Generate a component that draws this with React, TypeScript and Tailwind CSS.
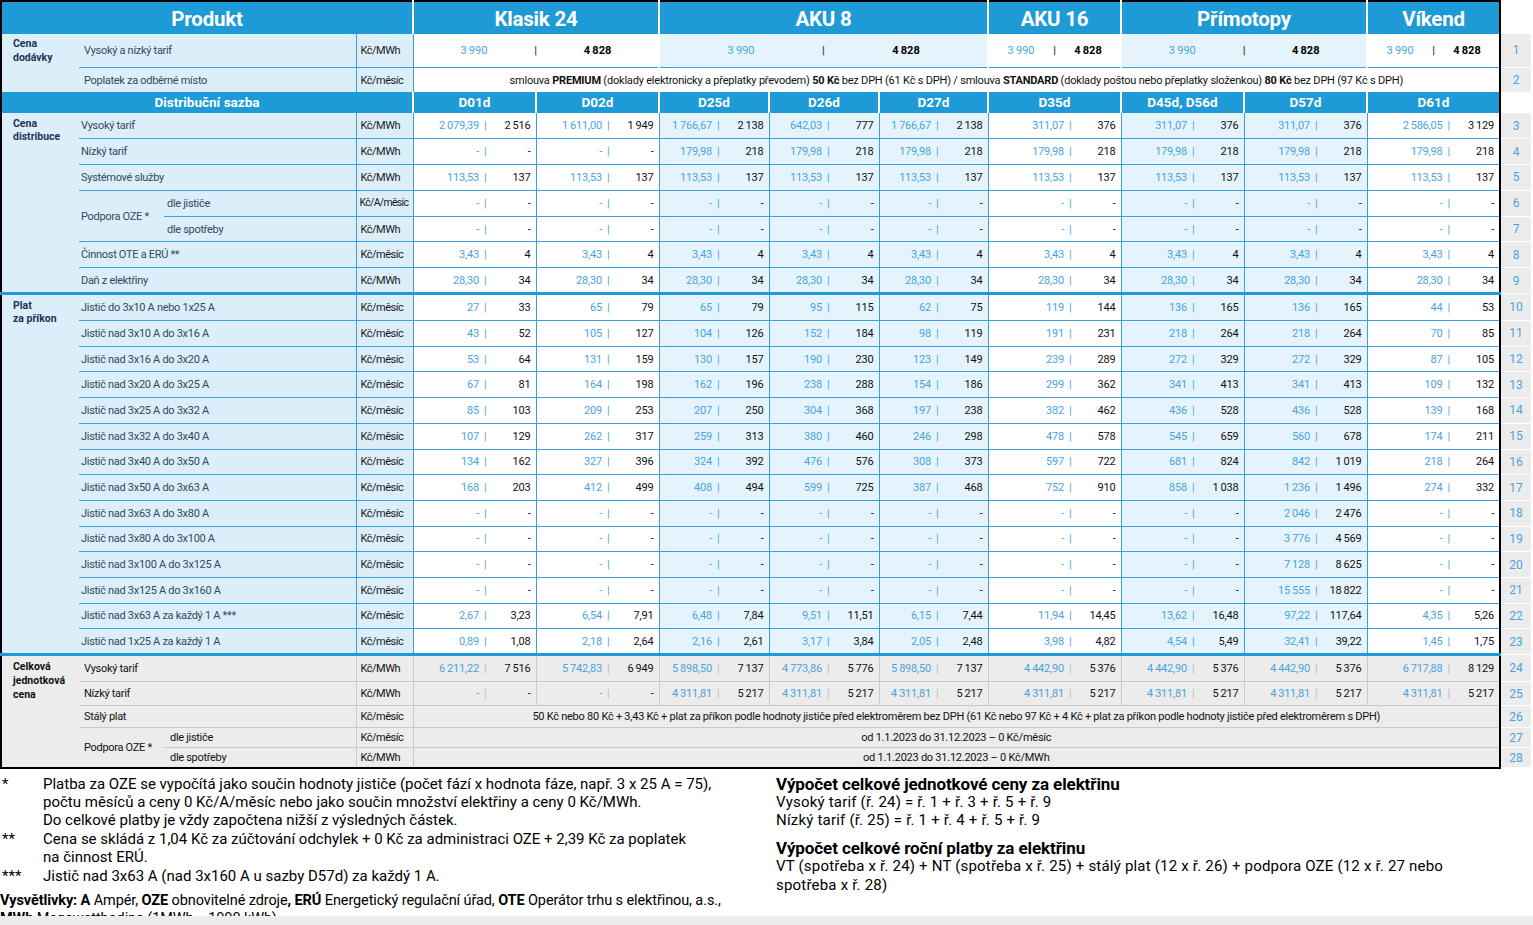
import React from 'react';

type V = [string, string] | null;

const sp = (s: string) => s.replace(/ /g, '\u2009');

const SHADED = [false, false, true, true, true, false, true, true, false];
const CODES = ['D01d', 'D02d', 'D25d', 'D26d', 'D27d', 'D35d', 'D45d, D56d', 'D57d', 'D61d'];

const fill = (v: V): V[] => Array.from({ length: 9 }, () => v);

const r3: V[] = [
  ['2 079,39', '2 516'], ['1 611,00', '1 949'], ['1 766,67', '2 138'], ['642,03', '777'], ['1 766,67', '2 138'],
  ['311,07', '376'], ['311,07', '376'], ['311,07', '376'], ['2 586,05', '3 129'],
];
const nt: V = ['179,98', '218'];
const r4: V[] = [null, null, nt, nt, nt, nt, nt, nt, nt];

const pr = (s: string): V[] =>
  s.split(',').map((p) => {
    const t = p.trim();
    if (t === '-') return null;
    const [a, b] = t.split('|');
    return [a.trim().replace(/_/g, ' ').replace(/;/g, ','), b.trim().replace(/_/g, ' ').replace(/;/g, ',')] as V;
  });

const prikon: { label: string; vals: V[] }[] = [
  { label: 'Jistič do 3x10 A nebo 1x25 A', vals: pr('27|33, 65|79, 65|79, 95|115, 62|75, 119|144, 136|165, 136|165, 44|53') },
  { label: 'Jistič nad 3x10 A do 3x16 A', vals: pr('43|52, 105|127, 104|126, 152|184, 98|119, 191|231, 218|264, 218|264, 70|85') },
  { label: 'Jistič nad 3x16 A do 3x20 A', vals: pr('53|64, 131|159, 130|157, 190|230, 123|149, 239|289, 272|329, 272|329, 87|105') },
  { label: 'Jistič nad 3x20 A do 3x25 A', vals: pr('67|81, 164|198, 162|196, 238|288, 154|186, 299|362, 341|413, 341|413, 109|132') },
  { label: 'Jistič nad 3x25 A do 3x32 A', vals: pr('85|103, 209|253, 207|250, 304|368, 197|238, 382|462, 436|528, 436|528, 139|168') },
  { label: 'Jistič nad 3x32 A do 3x40 A', vals: pr('107|129, 262|317, 259|313, 380|460, 246|298, 478|578, 545|659, 560|678, 174|211') },
  { label: 'Jistič nad 3x40 A do 3x50 A', vals: pr('134|162, 327|396, 324|392, 476|576, 308|373, 597|722, 681|824, 842|1_019, 218|264') },
  { label: 'Jistič nad 3x50 A do 3x63 A', vals: pr('168|203, 412|499, 408|494, 599|725, 387|468, 752|910, 858|1_038, 1_236|1_496, 274|332') },
  { label: 'Jistič nad 3x63 A do 3x80 A', vals: pr('-, -, -, -, -, -, -, 2_046|2_476, -') },
  { label: 'Jistič nad 3x80 A do 3x100 A', vals: pr('-, -, -, -, -, -, -, 3_776|4_569, -') },
  { label: 'Jistič nad 3x100 A do 3x125 A', vals: pr('-, -, -, -, -, -, -, 7_128|8_625, -') },
  { label: 'Jistič nad 3x125 A do 3x160 A', vals: pr('-, -, -, -, -, -, -, 15_555|18_822, -') },
  { label: 'Jistič nad 3x63 A za každý 1 A ***', vals: pr('2;67|3;23, 6;54|7;91, 6;48|7;84, 9;51|11;51, 6;15|7;44, 11;94|14;45, 13;62|16;48, 97;22|117;64, 4;35|5;26') },
  { label: 'Jistič nad 1x25 A za každý 1 A', vals: pr('0;89|1;08, 2;18|2;64, 2;16|2;61, 3;17|3;84, 2;05|2;48, 3;98|4;82, 4;54|5;49, 32;41|39;22, 1;45|1;75') },
];

const r24: V[] = pr('6_211;22|7_516, 5_742;83|6_949, 5_898;50|7_137, 4_773;86|5_776, 5_898;50|7_137, 4_442;90|5_376, 4_442;90|5_376, 4_442;90|5_376, 6_717;88|8_129');
const nt25: V = ['4 311,81', '5 217'];
const r25: V[] = [null, null, nt25, nt25, nt25, nt25, nt25, nt25, nt25];

function NumCell({ v, shaded, last, gray, thick }: { v: V; shaded: boolean; last: boolean; gray?: boolean; thick?: boolean }) {
  const [a, b] = v ?? ['-', '-'];
  const bg = gray ? 'bg-[#ececec]' : shaded ? 'bg-[#e5f4fc]' : 'bg-white';
  const bb = gray ? 'border-b border-b-[#c9c9c9]' : 'border-b border-b-[#3a9fdb]';
  const br = last ? 'border-r-2 border-r-black' : gray ? 'border-r border-r-[#c9c9c9]' : 'border-r border-r-[#3a9fdb]';
  const bt = thick ? 'border-t-[3px] border-t-[#1e9ad6]' : '';
  return (
    <td className={`${bg} ${bb} ${br} ${bt} p-0`}>
      <div className="flex items-center justify-end pr-[5px] whitespace-nowrap tracking-[-0.2px]">
        <span className="text-[#4aa3df]">{sp(a)}</span>
        <span className={gray ? 'ml-[5px] text-[#b8b8b8]' : 'ml-[5px] text-[#4aa3df]'}>|</span>
        <span className="w-[44px] text-right text-[#111]">{sp(b)}</span>
      </div>
    </td>
  );
}

function Nums({ vals, gray, thick }: { vals: V[]; gray?: boolean; thick?: boolean }) {
  return (
    <>
      {vals.map((v, i) => (
        <NumCell key={i} v={v} shaded={!gray && SHADED[i]} last={i === 8} gray={gray} thick={thick} />
      ))}
    </>
  );
}

function RN({ n }: { n: number }) {
  return <td className="bg-[#ececec] text-center text-[12px] text-[#4aa3df] border-b border-b-white p-0">{n}</td>;
}

function Prod({ colSpan, shaded, last }: { colSpan: number; shaded: boolean; last?: boolean }) {
  const bg = shaded ? 'bg-[#e5f4fc]' : 'bg-white';
  const br = last ? 'border-r-2 border-r-black' : 'border-r-2 border-r-white';
  return (
    <td colSpan={colSpan} className={`${bg} ${br} border-b border-b-[#3a9fdb] p-0`}>
      <div className="grid grid-cols-[1fr_auto_1fr] items-center">
        <span className="text-center text-[#4aa3df]">{sp('3 990')}</span>
        <span className="font-bold text-[#333]">|</span>
        <span className="text-center font-bold text-black">{sp('4 828')}</span>
      </div>
    </td>
  );
}

const H = 'bg-[#1e9ad6] text-white text-[20.5px] font-bold border-t-2 border-t-black pt-[2px] pb-0 px-0 tracking-[-0.2px]';
const DH = 'bg-[#1e9ad6] text-white text-[13.5px] font-bold p-0';

const GROUP_BLUE = 'bg-[#dbeef9] align-top pl-[11px] pt-[4px] font-bold text-[10.5px] leading-[13px] text-[#1d3557] border-l-2 border-l-black';
const ITEM_B = 'bg-[#dbeef9] pl-[2px] text-[#34495e] tracking-[-0.3px] border-b border-b-[#3a9fdb] whitespace-nowrap p-0';
const SUB_B = 'bg-[#dbeef9] pl-[3px] text-[#34495e] tracking-[-0.3px] border-b border-b-[#3a9fdb] whitespace-nowrap p-0';
const UNIT_B = 'bg-[#dbeef9] pl-[4px] text-[#1a1a1a] tracking-[-0.5px] border-b border-b-[#3a9fdb] border-l border-l-[#3a9fdb] border-r border-r-[#3a9fdb] whitespace-nowrap';
const UNIT_B_TIGHT = 'bg-[#dbeef9] pl-[3px] text-[#1a1a1a] text-[10.5px] tracking-[-0.7px] border-b border-b-[#3a9fdb] border-l border-l-[#3a9fdb] border-r border-r-[#3a9fdb] whitespace-nowrap';
const THICK = ' border-t-[3px] border-t-[#1e9ad6]';

const ITEM_G = 'bg-[#ececec] pl-[5px] text-[#111] tracking-[-0.3px] border-b border-b-[#c9c9c9] whitespace-nowrap';
const SUB_G = 'bg-[#ececec] pl-[6px] text-[#111] tracking-[-0.3px] border-b border-b-[#c9c9c9] whitespace-nowrap';
const UNIT_G = 'bg-[#ececec] pl-[4px] text-[#111] tracking-[-0.5px] border-b border-b-[#c9c9c9] border-l border-l-[#c9c9c9] border-r border-r-[#c9c9c9] whitespace-nowrap';
const MERGE_G = 'bg-[#ececec] text-center text-[#111] tracking-[-0.25px] whitespace-nowrap border-b border-b-[#c9c9c9] border-r-2 border-r-black';

export default function App() {
  return (
    <div className="w-[1533px] h-[925px] overflow-hidden bg-white font-['Roboto',sans-serif]">
      <table className="table-fixed w-[1530px] text-[11px] leading-none border-collapse">
        <colgroup>
          <col className="w-[78px]" />
          <col className="w-[85px]" />
          <col className="w-[192px]" />
          <col className="w-[57px]" />
          <col className="w-[123px]" />
          <col className="w-[123px]" />
          <col className="w-[110px]" />
          <col className="w-[110px]" />
          <col className="w-[109px]" />
          <col className="w-[133px]" />
          <col className="w-[123px]" />
          <col className="w-[123px]" />
          <col className="w-[133px]" />
          <col className="w-[31px]" />
        </colgroup>
        <tbody>
          <tr className="h-[33px]">
            <th colSpan={4} className={H + ' border-l-2 border-l-black border-r-2 border-r-white'}>Produkt</th>
            <th colSpan={2} className={H + ' border-r-2 border-r-white'}>Klasik 24</th>
            <th colSpan={3} className={H + ' border-r-2 border-r-white'}>AKU 8</th>
            <th className={H + ' border-r-2 border-r-white'}>AKU 16</th>
            <th colSpan={2} className={H + ' border-r-2 border-r-white'}>Přímotopy</th>
            <th className={H + ' border-r-2 border-r-black'}>Víkend</th>
            <th className="bg-white p-0" />
          </tr>

          <tr className="h-[33px]">
            <td rowSpan={2} className="bg-[#dbeef9] align-top pl-[11px] pt-[3px] font-bold text-[10.5px] leading-[14px] text-[#1d3557] border-l-2 border-l-black">
              Cena<br />dodávky
            </td>
            <td colSpan={2} className="bg-[#dbeef9] pl-[5px] text-[#34495e] tracking-[-0.3px] border-b border-b-[#3a9fdb] whitespace-nowrap">Vysoký a nízký tarif</td>
            <td className={UNIT_B}>Kč/MWh</td>
            <Prod colSpan={2} shaded={false} />
            <Prod colSpan={3} shaded />
            <Prod colSpan={1} shaded={false} />
            <Prod colSpan={2} shaded />
            <Prod colSpan={1} shaded={false} last />
            <RN n={1} />
          </tr>

          <tr className="h-[25px]">
            <td colSpan={2} className="bg-[#dbeef9] pl-[5px] pt-[2px] text-[#34495e] tracking-[-0.3px] whitespace-nowrap">Poplatek za odběrné místo</td>
            <td className="bg-[#dbeef9] pl-[4px] pt-[2px] text-[#1a1a1a] tracking-[-0.5px] border-l border-l-[#3a9fdb] border-r border-r-[#3a9fdb] whitespace-nowrap">Kč/měsíc</td>
            <td colSpan={9} className="bg-white pt-[2px] text-center text-[#111] whitespace-nowrap tracking-[-0.2px] border-r-2 border-r-black">
              smlouva <b>PREMIUM</b> (doklady elektronicky a přeplatky převodem) <b>50 Kč</b> bez DPH (61 Kč s DPH) / smlouva <b>STANDARD</b> (doklady poštou nebo přeplatky složenkou) <b>80 Kč</b> bez DPH (97 Kč s DPH)
            </td>
            <RN n={2} />
          </tr>

          <tr className="h-[21px]">
            <th colSpan={4} className={DH + ' border-l-2 border-l-black border-r-2 border-r-white'}>Distribuční sazba</th>
            {CODES.map((c, i) => (
              <th key={c} className={i === 8 ? DH + ' border-r-2 border-r-black' : DH + ' border-r-2 border-r-white'}>{c}</th>
            ))}
            <th className="bg-white p-0" />
          </tr>

          <tr className="h-[25.8px]">
            <td rowSpan={7} className={GROUP_BLUE}>Cena<br />distribuce</td>
            <td colSpan={2} className={ITEM_B}>Vysoký tarif</td>
            <td className={UNIT_B}>Kč/MWh</td>
            <Nums vals={r3} />
            <RN n={3} />
          </tr>
          <tr className="h-[25.8px]">
            <td colSpan={2} className={ITEM_B}>Nízký tarif</td>
            <td className={UNIT_B}>Kč/MWh</td>
            <Nums vals={r4} />
            <RN n={4} />
          </tr>
          <tr className="h-[25.8px]">
            <td colSpan={2} className={ITEM_B}>Systémové služby</td>
            <td className={UNIT_B}>Kč/MWh</td>
            <Nums vals={fill(['113,53', '137'])} />
            <RN n={5} />
          </tr>
          <tr className="h-[25.8px]">
            <td rowSpan={2} className={ITEM_B}>Podpora OZE *</td>
            <td className={SUB_B}>dle jističe</td>
            <td className={UNIT_B_TIGHT}>Kč/A/měsíc</td>
            <Nums vals={fill(null)} />
            <RN n={6} />
          </tr>
          <tr className="h-[25.8px]">
            <td className={SUB_B}>dle spotřeby</td>
            <td className={UNIT_B}>Kč/MWh</td>
            <Nums vals={fill(null)} />
            <RN n={7} />
          </tr>
          <tr className="h-[25.8px]">
            <td colSpan={2} className={ITEM_B}>Činnost OTE a ERÚ **</td>
            <td className={UNIT_B}>Kč/měsíc</td>
            <Nums vals={fill(['3,43', '4'])} />
            <RN n={8} />
          </tr>
          <tr className="h-[25.8px]">
            <td colSpan={2} className={ITEM_B}>Daň z elektřiny</td>
            <td className={UNIT_B}>Kč/MWh</td>
            <Nums vals={fill(['28,30', '34'])} />
            <RN n={9} />
          </tr>

          {prikon.map((r, i) => (
            <tr key={r.label} className={i === 0 ? 'h-[27px]' : 'h-[25.7px]'}>
              {i === 0 && (
                <td rowSpan={14} className={GROUP_BLUE + THICK}>Plat<br />za příkon</td>
              )}
              <td colSpan={2} className={i === 0 ? ITEM_B + THICK : ITEM_B}>{r.label}</td>
              <td className={i === 0 ? UNIT_B + THICK : UNIT_B}>Kč/měsíc</td>
              <Nums vals={r.vals} thick={i === 0} />
              <RN n={10 + i} />
            </tr>
          ))}

          <tr className="h-[27px]">
            <td rowSpan={5} className="bg-[#ececec] align-top pl-[11px] pt-[4px] font-bold text-[10.5px] leading-[14px] text-[#111] border-l-2 border-l-black border-b-2 border-b-black border-t-[3px] border-t-[#1e9ad6]">
              Celková<br />jednotková<br />cena
            </td>
            <td colSpan={2} className={ITEM_G + THICK}>Vysoký tarif</td>
            <td className={UNIT_G + THICK}>Kč/MWh</td>
            <Nums vals={r24} gray thick />
            <RN n={24} />
          </tr>
          <tr className="h-[24px]">
            <td colSpan={2} className={ITEM_G}>Nízký tarif</td>
            <td className={UNIT_G}>Kč/MWh</td>
            <Nums vals={r25} gray />
            <RN n={25} />
          </tr>
          <tr className="h-[22px]">
            <td colSpan={2} className={ITEM_G}>Stálý plat</td>
            <td className={UNIT_G}>Kč/měsíc</td>
            <td colSpan={9} className={MERGE_G}>
              50 Kč nebo 80 Kč + 3,43 Kč + plat za příkon podle hodnoty jističe před elektroměrem bez DPH (61 Kč nebo 97 Kč + 4 Kč + plat za příkon podle hodnoty jističe před elektroměrem s DPH)
            </td>
            <RN n={26} />
          </tr>
          <tr className="h-[20px]">
            <td rowSpan={2} className="bg-[#ececec] pl-[5px] text-[#111] tracking-[-0.3px] whitespace-nowrap border-b-2 border-b-black">Podpora OZE *</td>
            <td className={SUB_G}>dle jističe</td>
            <td className={UNIT_G}>Kč/měsíc</td>
            <td colSpan={9} className={MERGE_G}>od 1.1.2023 do 31.12.2023 – 0 Kč/měsíc</td>
            <RN n={27} />
          </tr>
          <tr className="h-[20px]">
            <td className="bg-[#ececec] pl-[6px] text-[#111] tracking-[-0.3px] whitespace-nowrap border-b-2 border-b-black">dle spotřeby</td>
            <td className="bg-[#ececec] pl-[4px] text-[#111] tracking-[-0.5px] whitespace-nowrap border-b-2 border-b-black border-l border-l-[#c9c9c9] border-r border-r-[#c9c9c9]">Kč/MWh</td>
            <td colSpan={9} className="bg-[#ececec] text-center text-[#111] tracking-[-0.25px] whitespace-nowrap border-b-2 border-b-black border-r-2 border-r-black">od 1.1.2023 do 31.12.2023 – 0 Kč/MWh</td>
            <RN n={28} />
          </tr>
        </tbody>
      </table>

      <div className="mt-[6px] h-[141px] overflow-hidden flex text-[15px] leading-[18.4px] tracking-[0px] text-black whitespace-nowrap">
        <div className="w-[776px] shrink-0">
          <div className="grid grid-cols-[43px_1fr]">
            <div className="pl-[2px]">*</div>
            <div>
              Platba za OZE se vypočítá jako součin hodnoty jističe (počet fází x hodnota fáze, např. 3 x 25 A = 75),<br />
              počtu měsíců a ceny 0 Kč/A/měsíc nebo jako součin množství elektřiny a ceny 0 Kč/MWh.<br />
              Do celkové platby je vždy započtena nižší z výsledných částek.
            </div>
            <div className="pl-[2px]">**</div>
            <div>
              Cena se skládá z 1,04 Kč za zúčtování odchylek + 0 Kč za administraci OZE + 2,39 Kč za poplatek<br />
              na činnost ERÚ.
            </div>
            <div className="pl-[2px]">***</div>
            <div>Jistič nad 3x63 A (nad 3x160 A u sazby D57d) za každý 1 A.</div>
          </div>
          <div className="mt-[7px] text-[14.5px] tracking-[-0.1px]">
            <b>Vysvětlivky: A</b> Ampér, <b>OZE</b> obnovitelné zdroje<b>,</b> <b>ERÚ</b> Energetický regulační úřad, <b>OTE</b> Operátor trhu s elektřinou, a.s.,<br />
            <b>MWh</b> Megawatthodina (1MWh = 1000 kWh)
          </div>
        </div>
        <div className="tracking-[0.2px]">
          <div className="font-bold text-[17px] tracking-[-0.1px]">Výpočet celkové jednotkové ceny za elektřinu</div>
          <div>Vysoký tarif (ř. 24) = ř. 1 + ř. 3 + ř. 5 + ř. 9</div>
          <div>Nízký tarif (ř. 25) = ř. 1 + ř. 4 + ř. 5 + ř. 9</div>
          <div className="mt-[9px] font-bold text-[17px] tracking-[-0.1px]">Výpočet celkové roční platby za elektřinu</div>
          <div>
            VT (spotřeba x ř. 24) + NT (spotřeba x ř. 25) + stálý plat (12 x ř. 26) + podpora OZE (12 x ř. 27 nebo<br />
            spotřeba x ř. 28)
          </div>
        </div>
      </div>
      <div className="h-[10px] bg-[#ececec]" />
    </div>
  );
}
